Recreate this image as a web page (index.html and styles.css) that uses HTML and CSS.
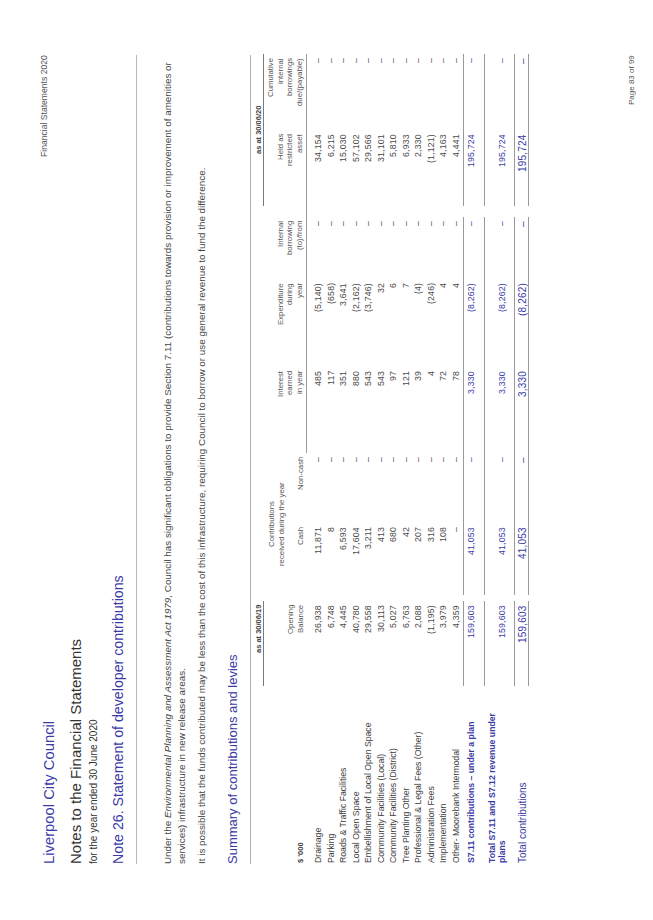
FILE: index.html
```html
<!DOCTYPE html>
<html lang="en">
<head>
<meta charset="utf-8">
<title>Note 26. Statement of developer contributions</title>
<link rel="stylesheet" href="styles.css">
</head>
<body>
<div class="page">
  <header class="top">
    <div class="titles">
      <div class="council">Liverpool City Council</div>
      <div class="notes">Notes to the Financial Statements</div>
      <div class="period">for the year ended 30 June 2020</div>
      <div class="note">Note 26. Statement of developer contributions</div>
    </div>
    <div class="fs">Financial Statements 2020</div>
  </header>
  <div class="rule"></div>

  <p class="para first">Under the <i>Environmental Planning and Assessment Act 1979</i>, Council has significant obligations to provide Section 7.11 (contributions towards provision or improvement of amenities or services) infrastructure in new release areas.</p>
  <p class="para second">It is possible that the funds contributed may be less than the cost of this infrastructure, requiring Council to borrow or use general revenue to fund the difference.</p>

  <h2 class="summary">Summary of contributions and levies</h2>

  <div class="tbl">
    <div class="row hA">
      <div class="c1"></div>
      <div class="c2 asat end">as at 30/06/19</div>
      <div class="c3"></div>
      <div class="c4-8"></div>
      <div class="c9"></div>
      <div class="c10-11 asat">as at 30/06/20</div>
    </div>
    <div class="row hB">
      <div class="h c1 unit">$ '000</div>
      <div class="h c2">Opening<br>Balance</div>
      <div class="c3"></div>
      <div class="h c4-5 contrib">Contributions<br>received during the year</div>
      <div class="h c4">Cash</div>
      <div class="h c5">Non-cash</div>
      <div class="h c6 ruled">Interest<br>earned<br>in year</div>
      <div class="h c7 ruled">Expenditure<br>during<br>year</div>
      <div class="h c8 ruled">Internal<br>borrowing<br>(to)/from</div>
      <div class="c9 ruled"></div>
      <div class="h c10 ruled">Held as<br>restricted<br>asset</div>
      <div class="h c11 ruled">Cumulative<br>internal<br>borrowings<br>due/(payable)</div>
    </div>

    <div class="body">
      <div class="row d"><div class="l">Drainage</div><div class="n">26,938</div><div></div><div class="n">11,871</div><div class="n">–</div><div class="n">485</div><div class="n">(5,140)</div><div class="n">–</div><div></div><div class="n">34,154</div><div class="n">–</div></div>
      <div class="row d"><div class="l">Parking</div><div class="n">6,748</div><div></div><div class="n">8</div><div class="n">–</div><div class="n">117</div><div class="n">(658)</div><div class="n">–</div><div></div><div class="n">6,215</div><div class="n">–</div></div>
      <div class="row d"><div class="l">Roads &amp; Traffic Facilities</div><div class="n">4,445</div><div></div><div class="n">6,593</div><div class="n">–</div><div class="n">351</div><div class="n">3,641</div><div class="n">–</div><div></div><div class="n">15,030</div><div class="n">–</div></div>
      <div class="row d"><div class="l">Local Open Space</div><div class="n">40,780</div><div></div><div class="n">17,604</div><div class="n">–</div><div class="n">880</div><div class="n">(2,162)</div><div class="n">–</div><div></div><div class="n">57,102</div><div class="n">–</div></div>
      <div class="row d"><div class="l">Embellishment of Local Open Space</div><div class="n">29,558</div><div></div><div class="n">3,211</div><div class="n">–</div><div class="n">543</div><div class="n">(3,746)</div><div class="n">–</div><div></div><div class="n">29,566</div><div class="n">–</div></div>
      <div class="row d"><div class="l">Community Facilities (Local)</div><div class="n">30,113</div><div></div><div class="n">413</div><div class="n">–</div><div class="n">543</div><div class="n">32</div><div class="n">–</div><div></div><div class="n">31,101</div><div class="n">–</div></div>
      <div class="row d"><div class="l">Community Facilities (District)</div><div class="n">5,027</div><div></div><div class="n">680</div><div class="n">–</div><div class="n">97</div><div class="n">6</div><div class="n">–</div><div></div><div class="n">5,810</div><div class="n">–</div></div>
      <div class="row d"><div class="l">Tree Planting Other</div><div class="n">6,763</div><div></div><div class="n">42</div><div class="n">–</div><div class="n">121</div><div class="n">7</div><div class="n">–</div><div></div><div class="n">6,933</div><div class="n">–</div></div>
      <div class="row d"><div class="l">Professional &amp; Legal Fees (Other)</div><div class="n">2,088</div><div></div><div class="n">207</div><div class="n">–</div><div class="n">39</div><div class="n">(4)</div><div class="n">–</div><div></div><div class="n">2,330</div><div class="n">–</div></div>
      <div class="row d"><div class="l">Administration Fees</div><div class="n">(1,195)</div><div></div><div class="n">316</div><div class="n">–</div><div class="n">4</div><div class="n">(246)</div><div class="n">–</div><div></div><div class="n">(1,121)</div><div class="n">–</div></div>
      <div class="row d"><div class="l">Implementation</div><div class="n">3,979</div><div></div><div class="n">108</div><div class="n">–</div><div class="n">72</div><div class="n">4</div><div class="n">–</div><div></div><div class="n">4,163</div><div class="n">–</div></div>
      <div class="row d"><div class="l">Other- Moorebank Intermodal</div><div class="n">4,359</div><div></div><div class="n">–</div><div class="n">–</div><div class="n">78</div><div class="n">4</div><div class="n">–</div><div></div><div class="n">4,441</div><div class="n">–</div></div>

      <div class="row sub"><div class="l">S7.11 contributions – under a plan</div><div class="n">159,603</div><div class="g"></div><div class="n">41,053</div><div class="n">–</div><div class="n">3,330</div><div class="n">(8,262)</div><div class="n">–</div><div class="g"></div><div class="n">195,724</div><div class="n">–</div></div>

      <div class="row tot"><div class="l">Total S7.11 and S7.12 revenue under<br>plans</div><div class="n">159,603</div><div class="g"></div><div class="n">41,053</div><div class="n">–</div><div class="n">3,330</div><div class="n">(8,262)</div><div class="n">–</div><div class="g"></div><div class="n">195,724</div><div class="n">–</div></div>

      <div class="row grand"><div class="l">Total contributions</div><div class="n">159,603</div><div class="g"></div><div class="n">41,053</div><div class="n">–</div><div class="n">3,330</div><div class="n">(8,262)</div><div class="n">–</div><div class="g"></div><div class="n">195,724</div><div class="n">–</div></div>
    </div>
  </div>

  <footer class="pg">Page 83 of 99</footer>
</div>
</body>
</html>
```

FILE: styles.css
```css
* { box-sizing: border-box; }

html, body {
  margin: 0;
  padding: 0;
  background: #ffffff;
}

body {
  width: 653px;
  height: 920px;
  overflow: hidden;
}

/* The landscape page is laid out sideways: vertical-rl + a half turn
   gives text that reads bottom-to-top, as in the rotated PDF page. */
.page {
  --blue: #3b3ba6;
  --cols: 178px 85px 6px 72px 70px 86px 88px 62px 11px 76px 76px;
  writing-mode: vertical-rl;
  text-orientation: sideways;
  inline-size: 920px;
  block-size: 653px;
  padding-block: 40px 16px;
  padding-inline: 56px 55px;
  display: flex;
  flex-direction: column;
  transform: rotate(180deg);
  font-family: "Liberation Sans", Arial, sans-serif;
  color: #454545;
}

.top {
  display: flex;
  justify-content: space-between;
  align-items: flex-start;
}

.council {
  font-size: 14.8px;
  line-height: 18px;
  color: var(--blue);
}

.notes {
  margin-block-start: 9px;
  font-size: 15px;
  line-height: 18px;
  color: #333;
}

.period {
  margin-block-start: 3px;
  font-size: 10px;
  line-height: 12px;
  color: #333;
}

.note {
  margin-block-start: 9px;
  font-size: 14.2px;
  line-height: 18px;
  color: var(--blue);
}

.fs {
  margin-block-start: -1.5px;
  font-size: 8.6px;
  line-height: 10px;
  color: #555;
}

.rule {
  margin-block-start: 9px;
  block-size: 0;
  border-block-start: 1px solid #b8b8b8;
}

.para {
  margin: 0;
  font-size: 9.85px;
  line-height: 13.5px;
  color: #454545;
}

.para.first { margin-block-start: 24px; }
.para.second { margin-block-start: 7px; }

.summary {
  margin: 0;
  margin-block-start: 16px;
  font-size: 13px;
  line-height: 16px;
  font-weight: normal;
  color: var(--blue);
}

.tbl {
  margin-block-start: 10px;
  border-block-start: 1px solid #b0b0b0;
}

.row {
  display: grid;
  grid-template-columns: var(--cols);
}

.hA { block-size: 13px; }
.hA .c4-8 { grid-column: 4 / 9; }
.hA .c10-11 { grid-column: 10 / 12; }

.asat {
  padding-block-start: 2px;
  font-size: 7.5px;
  line-height: 9px;
  font-weight: bold;
  text-align: center;
  color: #444;
  border-block-end: 1px solid #7a7a7a;
}

.asat.end {
  text-align: end;
  padding-inline-end: 4px;
}

.hB { block-size: 43px; }
.hB > * { grid-row: 1; }
.hB .c1 { grid-column: 1; }
.hB .c2 { grid-column: 2; }
.hB .c3 { grid-column: 3; }
.hB .c4 { grid-column: 4; }
.hB .c5 { grid-column: 5; }
.hB .c4-5 { grid-column: 4 / 6; }
.hB .c6 { grid-column: 6; }
.hB .c7 { grid-column: 7; }
.hB .c8 { grid-column: 8; }
.hB .c9 { grid-column: 9; }
.hB .c10 { grid-column: 10; }
.hB .c11 { grid-column: 11; }

.h {
  display: flex;
  flex-direction: column;
  justify-content: flex-end;
  padding-inline-end: 4px;
  padding-block-end: 2.25px;
  font-size: 7.8px;
  line-height: 9.5px;
  text-align: end;
  color: #555;
}

.h.unit {
  text-align: start;
  padding-inline: 1px 0;
  font-weight: bold;
  font-size: 7.5px;
  color: #444;
}

.h.contrib {
  justify-content: flex-start;
  padding-inline-end: 0;
  padding-block: 2.75px 0;
  text-align: center;
}

.ruled { border-block-end: 1px solid #9a9a9a; }

.body { padding-block-start: 4.75px; }

.row > div { white-space: nowrap; }

.l {
  padding-inline-start: 1px;
  color: #3d3d3d;
}

.n {
  text-align: end;
  padding-inline-end: 4px;
  letter-spacing: 0.2px;
  color: #4a4a4a;
}

.d {
  block-size: 12.5px;
  font-size: 8.7px;
  line-height: 12.5px;
}

.sub, .tot, .grand { color: var(--blue); }
.sub .l, .tot .l, .grand .l,
.sub .n, .tot .n, .grand .n { color: var(--blue); }

.sub {
  margin-block-start: 1.25px;
  block-size: 21px;
  font-size: 8.7px;
  line-height: 12px;
}

.sub > div,
.tot > div,
.grand > div {
  border-block-start: 1px solid #9a9a9a;
}

.sub > .l,
.sub > .g,
.tot > .l,
.tot > .g,
.grand > .l,
.grand > .g {
  border-block-start-color: transparent;
}

.sub .l,
.tot .l {
  font-weight: bold;
}

.tot {
  block-size: 30px;
  font-size: 8.7px;
  line-height: 10px;
}

.tot .l { padding-block-start: 1px; }
.tot .n { padding-block-start: 11px; }

.grand {
  block-size: 15px;
  font-size: 10px;
  line-height: 13px;
}

.grand > div { border-block-end: 1px solid #9a9a9a; }
.grand > .l,
.grand > .g { border-block-end-color: transparent; }

.pg {
  margin-block-start: auto;
  text-align: end;
  font-size: 8px;
  line-height: 10px;
  color: #555;
}
```
